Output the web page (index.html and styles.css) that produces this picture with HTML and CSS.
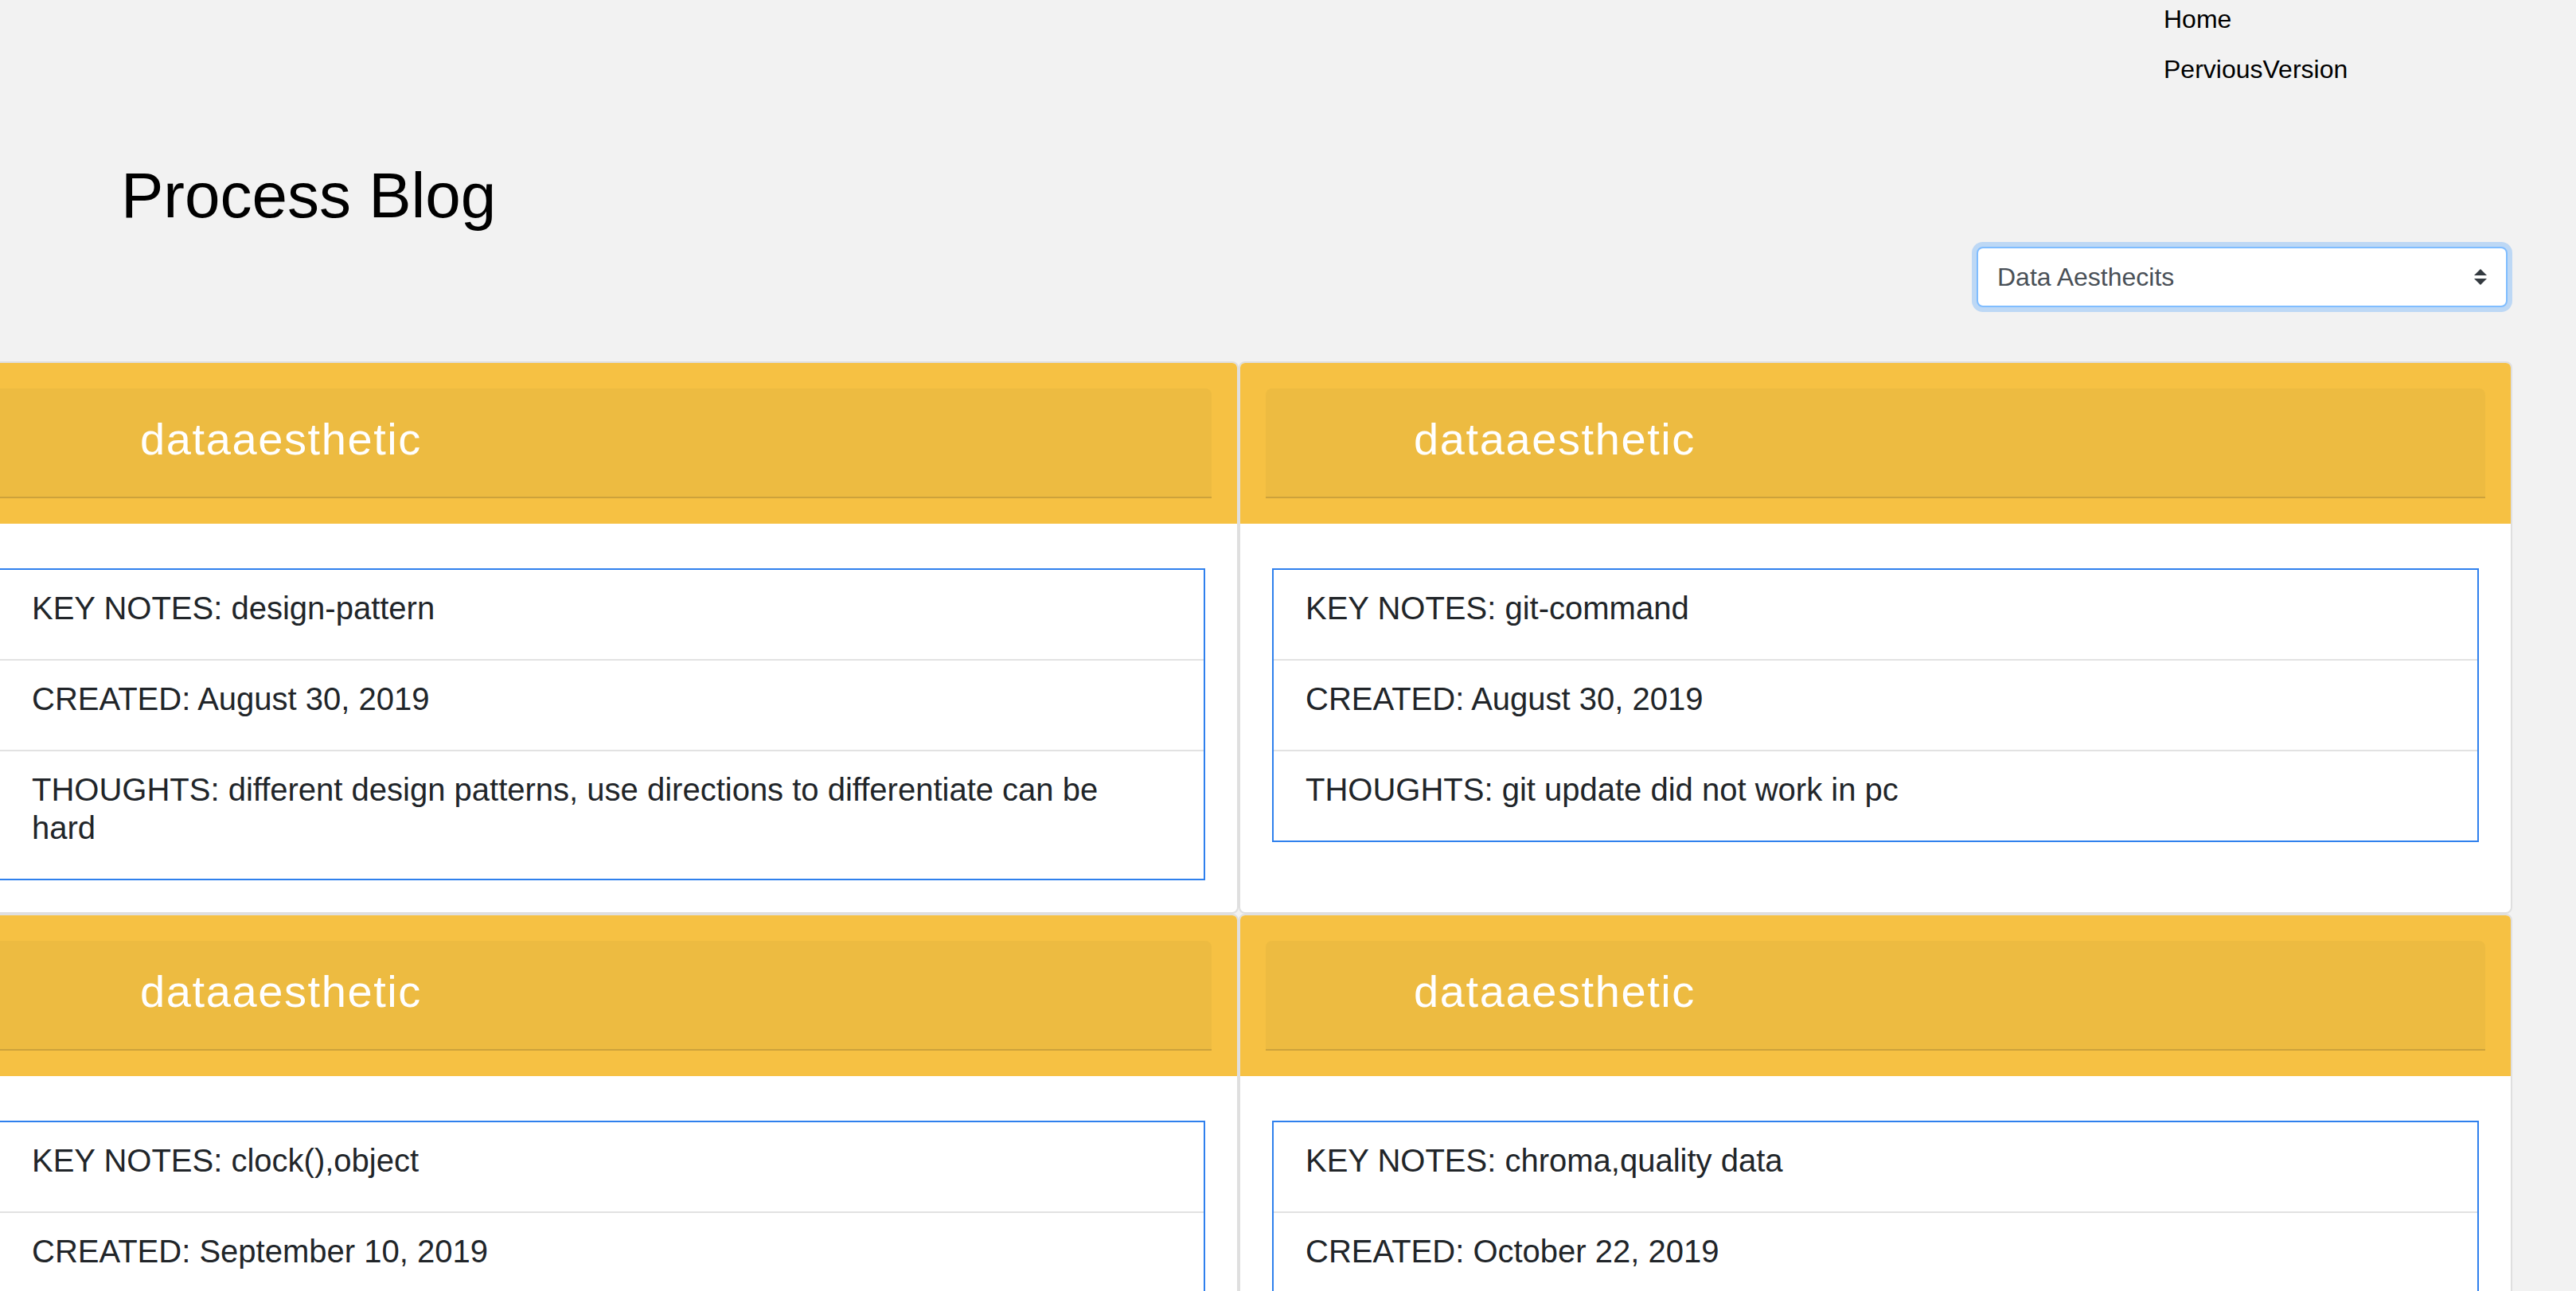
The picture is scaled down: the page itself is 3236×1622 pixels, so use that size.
FILE: index.html
```html
<!DOCTYPE html>
<html lang="en">
<head>
<meta charset="utf-8">
<title>Process Blog</title>
<link rel="stylesheet" href="styles.css">
</head>
<body>
<header class="top">
  <nav class="nav">
    <ul class="nav-list">
      <li class="nav-item">Home</li>
      <li class="nav-item">PerviousVersion</li>
    </ul>
  </nav>
  <h1 class="title">Process Blog</h1>
  <div class="filter-row">
    <div class="select-wrap">
      <select class="select">
        <option>Data Aesthecits</option>
      </select>
      <svg class="select-arrow" width="16" height="20" viewBox="0 0 4 5" aria-hidden="true"><path d="M2 0L0 2h4zm0 5L0 3h4z" fill="#343a40"/></svg>
    </div>
  </div>
</header>

<main class="cards">
  <article class="card">
    <div class="card-header"><div class="band">dataaesthetic</div></div>
    <div class="card-body">
      <ul class="list">
        <li class="item"><h5 class="item-text">KEY NOTES: design-pattern</h5></li>
        <li class="item"><h5 class="item-text">CREATED: August 30, 2019</h5></li>
        <li class="item"><h5 class="item-text">THOUGHTS: different design patterns, use directions to differentiate can be hard</h5></li>
      </ul>
    </div>
  </article>
  <article class="card">
    <div class="card-header"><div class="band">dataaesthetic</div></div>
    <div class="card-body">
      <ul class="list">
        <li class="item"><h5 class="item-text">KEY NOTES: git-command</h5></li>
        <li class="item"><h5 class="item-text">CREATED: August 30, 2019</h5></li>
        <li class="item"><h5 class="item-text">THOUGHTS: git update did not work in pc</h5></li>
      </ul>
    </div>
  </article>
  <article class="card">
    <div class="card-header"><div class="band">dataaesthetic</div></div>
    <div class="card-body">
      <ul class="list">
        <li class="item"><h5 class="item-text">KEY NOTES: clock(),object</h5></li>
        <li class="item"><h5 class="item-text">CREATED: September 10, 2019</h5></li>
      </ul>
    </div>
  </article>
  <article class="card">
    <div class="card-header"><div class="band">dataaesthetic</div></div>
    <div class="card-body">
      <ul class="list">
        <li class="item"><h5 class="item-text">KEY NOTES: chroma,quality data</h5></li>
        <li class="item"><h5 class="item-text">CREATED: October 22, 2019</h5></li>
      </ul>
    </div>
  </article>
</main>
</body>
</html>
```

FILE: styles.css
```css
html {
  overflow: hidden;
}

body {
  margin: 0;
  background: #f2f2f2;
  font-family: "Liberation Sans", Arial, sans-serif;
  color: #000;
}

.top {
  display: flex;
  flex-direction: column;
}

.nav {
  display: grid;
  grid-template-columns: 1fr 518px;
}

.nav-list {
  grid-column: 2;
  list-style: none;
  margin: 0;
  padding: 0;
}

.nav-item {
  font-size: 32px;
  line-height: 48px;
  padding-bottom: 15px;
  color: #000;
}

.title {
  margin: 72px 0 0 0;
  padding-left: 152px;
  font-size: 80px;
  line-height: 96px;
  font-weight: 400;
  color: #000;
}

.filter-row {
  display: flex;
  justify-content: flex-end;
  padding-right: 86px;
  margin-top: 16px;
}

.select-wrap {
  position: relative;
  width: 667px;
  height: 76px;
}

.select {
  appearance: none;
  -webkit-appearance: none;
  box-sizing: border-box;
  width: 100%;
  height: 76px;
  padding: 12px 56px 12px 24px;
  font-family: "Liberation Sans", Arial, sans-serif;
  font-size: 32px;
  line-height: 48px;
  color: #495057;
  background: #fff;
  border: 2px solid #80bdff;
  border-radius: 8px;
  box-shadow: 0 0 0 6px rgba(0, 123, 255, 0.22);
  outline: none;
}

.select-arrow {
  position: absolute;
  right: 26px;
  top: 28px;
  pointer-events: none;
}

.cards {
  display: grid;
  grid-template-columns: 1600px 1600px;
  margin: 68px 0 0 -44px;
}

.card {
  box-sizing: border-box;
  display: flex;
  flex-direction: column;
  background: #fff;
  border: 2px solid #dfdfdf;
  border-radius: 8px;
  overflow: hidden;
}

.card-header {
  background: #f6c143;
  padding: 32px;
}

.band {
  background: #edbb41;
  border-radius: 8px 8px 0 0;
  border-bottom: 2px solid #cda23b;
  padding: 30px 0 39px 186px;
  font-size: 56px;
  line-height: 67px;
  letter-spacing: 1.6px;
  color: #fff;
}

.card-body {
  padding: 56px 40px 40px 40px;
}

.list {
  list-style: none;
  margin: 0;
  padding: 0;
  border: 2px solid #2f80ed;
}

.item {
  padding: 24px 72px 24px 40px;
}

.item + .item {
  border-top: 2px solid #e2e2e2;
}

.item-text {
  margin: 0 0 16px 0;
  font-size: 40px;
  line-height: 48px;
  font-weight: 400;
  color: #212529;
}
```
